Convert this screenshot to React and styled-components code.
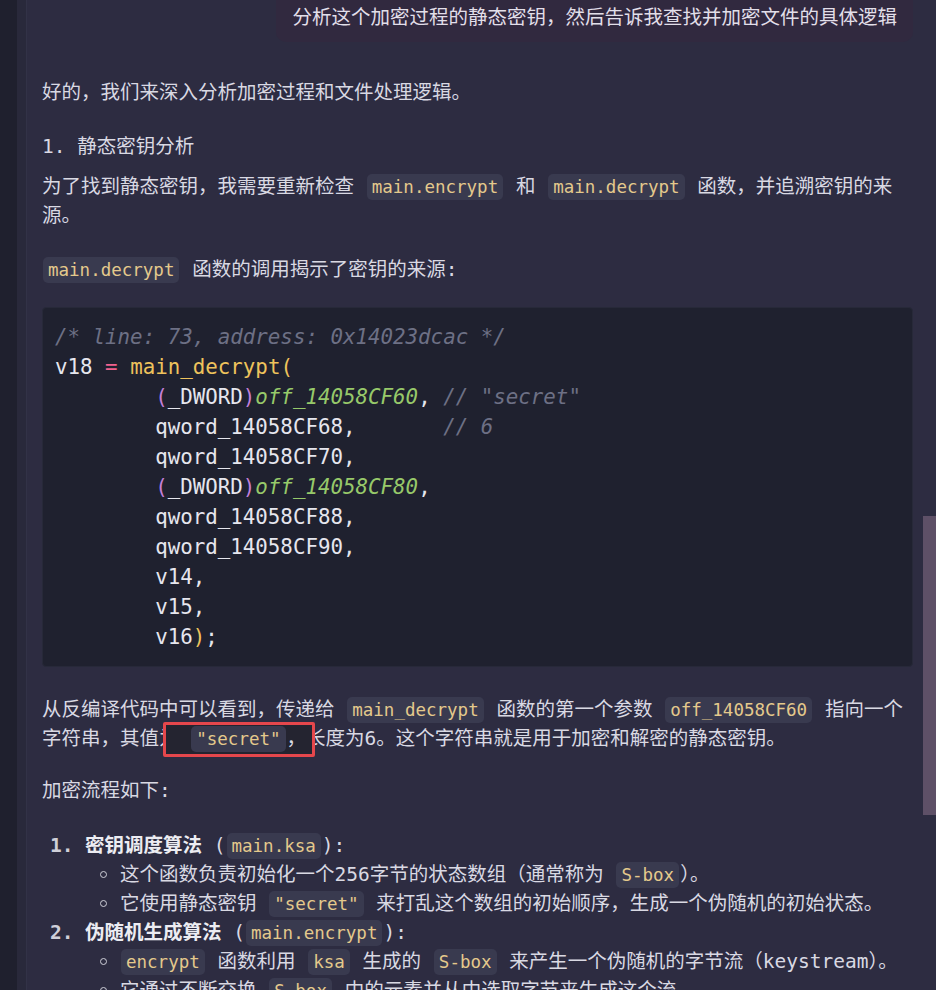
import React from "react";
import styled, { createGlobalStyle } from "styled-components";

const Global = createGlobalStyle`
  html, body { margin: 0; padding: 0; background: #2d2c41; }
  body { width: 936px; height: 990px; overflow: hidden; }
  #root { height: 990px; }
`;

const Page = styled.div`
  display: flex;
  height: 990px;
  overflow: hidden;
  background: #2d2c41;
  font-family: "DejaVu Sans Mono", "Noto Sans CJK SC", monospace;
  color: #d9d9e3;
  font-size: 19.5px;
  line-height: 29px;
`;

const Strip = styled.div`
  width: 17px;
  flex: none;
  background: #1f202e;
`;

const Gutter = styled.div`
  width: 9px;
  flex: none;
  background: #29293b;
  border-right: 1px solid #323247;
`;

const Content = styled.main`
  flex: 1;
  min-width: 0;
  padding-left: 15px;
  display: flex;
  flex-direction: column;
  & > * { flex-shrink: 0; }
`;

const Track = styled.div`
  width: 23px;
  flex: none;
  display: flex;
  flex-direction: column;
  align-items: flex-end;
`;

const Thumb = styled.div`
  margin-top: 516px;
  width: 13px;
  height: 299px;
  flex: none;
  background: #5e5067;
`;

const Bubble = styled.div`
  align-self: flex-end;
  padding: 3px 16px 10px;
  background: #31293f;
  border-radius: 0 0 10px 10px;
  color: #e2dfe9;
`;

const Para = styled.p`
  margin: ${(p) => p.$gap}px 0 0;
  position: relative;
`;

const Code = styled.code`
  font-family: "DejaVu Sans Mono", monospace;
  font-size: 17.5px;
  line-height: 1;
  color: #e4c98c;
  background: #393a4f;
  border-radius: 5px;
  padding: 3px 5px;
  margin: 0 1px;
`;

const Mark = styled.span`
  position: relative;
  z-index: 0;
`;

const MarkBox = styled.span`
  position: absolute;
  left: -27px;
  right: -9px;
  top: calc(50% - 17px);
  height: 35px;
  box-sizing: border-box;
  border: 3px solid #e5474c;
  border-radius: 2px;
  background: #242430;
  z-index: -1;
`;

const CodeBlock = styled.pre`
  margin: ${(p) => p.$gap}px 0 0;
  padding: 14px 12px;
  background: #1f212f;
  border: 1px solid #272939;
  border-radius: 4px;
  font-family: "DejaVu Sans Mono", monospace;
  font-size: 20.8px;
  line-height: 30px;
  color: #e6e6ee;
  white-space: pre;
  overflow: hidden;
`;

const colors = {
  comment: "#6d7085",
  op: "#f0628e",
  fn: "#eec35c",
  paren: "#c47fd9",
  green: "#97c96a",
};

const Tok = styled.span`
  color: ${(p) => colors[p.$k] || "inherit"};
  font-style: ${(p) => (p.$k === "comment" || p.$k === "green" ? "italic" : "normal")};
`;

const List = styled.ol`
  margin: ${(p) => p.$gap}px 0 0;
  padding: 0 0 0 8px;
  list-style: none;
`;

const Item = styled.li`
  display: flex;
`;

const Num = styled.span`
  width: 35px;
  flex: none;
  color: #cfcfd8;
  font-weight: 700;
`;

const ItemBody = styled.div`
  flex: 1;
  min-width: 0;
`;

const Title = styled.strong`
  font-weight: 700;
  color: #ececf2;
`;

const SubList = styled.ul`
  margin: 0;
  padding: 0 0 0 15px;
  list-style: none;
`;

const SubItem = styled.li`
  display: flex;
  align-items: baseline;
`;

const Dot = styled.span`
  flex: none;
  width: 7px;
  height: 7px;
  box-sizing: border-box;
  border: 1.5px solid #cfcfd8;
  border-radius: 50%;
  margin-right: 13px;
  align-self: center;
`;

const codeLines = [
  [["comment", "/* line: 73, address: 0x14023dcac */"]],
  [["", "v18 "], ["op", "="], ["", " "], ["fn", "main_decrypt("]],
  [["", "        "], ["paren", "("], ["", "_DWORD"], ["paren", ")"], ["green", "off_14058CF60"], ["", ", "], ["comment", '// "secret"']],
  [["", "        qword_14058CF68,       "], ["comment", "// 6"]],
  [["", "        qword_14058CF70,"]],
  [["", "        "], ["paren", "("], ["", "_DWORD"], ["paren", ")"], ["green", "off_14058CF80"], ["", ","]],
  [["", "        qword_14058CF88,"]],
  [["", "        qword_14058CF90,"]],
  [["", "        v14,"]],
  [["", "        v15,"]],
  [["", "        v16"], ["fn", ")"], ["", ";"]],
];

const steps = [
  {
    title: "密钥调度算法",
    code: "main.ksa",
    bullets: [
      <>这个函数负责初始化一个256字节的状态数组（通常称为 <Code>S-box</Code>）。</>,
      <>它使用静态密钥 <Code>"secret"</Code> 来打乱这个数组的初始顺序，生成一个伪随机的初始状态。</>,
    ],
  },
  {
    title: "伪随机生成算法",
    code: "main.encrypt",
    bullets: [
      <><Code>encrypt</Code> 函数利用 <Code>ksa</Code> 生成的 <Code>S-box</Code> 来产生一个伪随机的字节流（keystream）。</>,
      <>它通过不断交换 <Code>S-box</Code> 中的元素并从中选取字节来生成这个流。</>,
      <>然后将这个字节流与明文数据进行异或运算，得到密文。</>,
    ],
  },
];

export default function App() {
  return (
    <>
      <Global />
      <Page>
        <Strip />
        <Gutter />
        <Content>
          <Bubble>分析这个加密过程的静态密钥，然后告诉我查找并加密文件的具体逻辑</Bubble>
          <Para $gap={36}>好的，我们来深入分析加密过程和文件处理逻辑。</Para>
          <Para $gap={25}>1. 静态密钥分析</Para>
          <Para $gap={11}>
            为了找到静态密钥，我需要重新检查 <Code>main.encrypt</Code> 和 <Code>main.decrypt</Code> 函数，并追溯密钥的来源。
          </Para>
          <Para $gap={25}>
            <Code>main.decrypt</Code> 函数的调用揭示了密钥的来源:
          </Para>
          <CodeBlock $gap={23}>
            {codeLines.map((line, i) => (
              <div key={i}>
                {line.map(([k, t], j) => (
                  <Tok key={j} $k={k}>{t}</Tok>
                ))}
              </div>
            ))}
          </CodeBlock>
          <Para $gap={28}>
            从反编译代码中可以看到，传递给 <Code>main_decrypt</Code> 函数的第一个参数 <Code>off_14058CF60</Code> 指向一个字符串，其值为 <Mark><MarkBox /><Code>"secret"</Code>，</Mark>长度为6。这个字符串就是用于加密和解密的静态密钥。
          </Para>
          <Para $gap={23}>加密流程如下:</Para>
          <List $gap={26}>
            {steps.map((s, i) => (
              <Item key={i}>
                <Num>{i + 1}.</Num>
                <ItemBody>
                  <Title>{s.title}</Title> (<Code>{s.code}</Code>):
                  <SubList>
                    {s.bullets.map((b, j) => (
                      <SubItem key={j}>
                        <Dot />
                        <span>{b}</span>
                      </SubItem>
                    ))}
                  </SubList>
                </ItemBody>
              </Item>
            ))}
          </List>
        </Content>
        <Track>
          <Thumb />
        </Track>
      </Page>
    </>
  );
}
